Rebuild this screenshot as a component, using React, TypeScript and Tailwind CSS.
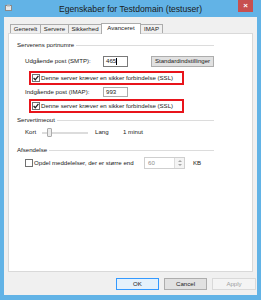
import React from "react";

function Check({ checked }: { checked?: boolean }) {
  return (
    <div className="w-[8px] h-[8px] border border-[#707070] bg-white flex items-center justify-center shrink-0">
      {checked && (
        <svg width="6" height="6" viewBox="0 0 6 6">
          <path d="M0.6 3 L2.3 4.8 L5.4 0.8" stroke="#222" strokeWidth="1.3" fill="none" />
        </svg>
      )}
    </div>
  );
}

function Group({ title }: { title: string }) {
  return (
    <div className="flex items-center h-[8px] pr-[38px]">
      <span className="whitespace-nowrap">{title}</span>
      <div className="flex-1 h-px bg-[#dcdcdc] ml-[2px]" />
    </div>
  );
}

export default function App() {
  return (
    <div className="w-[261px] h-[300px] bg-[#62b3e6] flex flex-col overflow-hidden font-['Liberation_Sans',Arial,sans-serif] text-[6.1px] text-[#1a1a1a] leading-none">
      {/* title bar */}
      <div className="h-[17px] relative flex items-center justify-center shrink-0">
        <svg className="absolute left-[5px] top-[4px]" width="8" height="8" viewBox="0 0 8 8">
          <rect x="0.5" y="1.5" width="6" height="5" fill="#e8e8e8" stroke="#8a8a8a" />
          <rect x="2" y="0.5" width="3" height="2" fill="#b0b0b0" />
        </svg>
        <span className="text-[8.6px] text-[#1a1a1a] mt-[2px]">Egenskaber for Testdomain (testuser)</span>
        <div className="absolute right-[8px] top-0 w-[15px] h-[12px] bg-[#c75050] flex items-center justify-center">
          <span className="text-white text-[8px] font-bold">×</span>
        </div>
      </div>

      {/* client */}
      <div className="flex-1 mx-[4px] mb-[5px] bg-[#f0f0f0] flex flex-col">
        {/* tabs */}
        <div className="h-[16px] flex items-end pl-[6px] shrink-0">
          {[
            ["Generelt", 31],
            ["Servere", 29],
            ["Sikkerhed", 34],
          ].map(([t, w]) => (
            <div
              key={t as string}
              style={{ width: w as number }}
              className="h-[9px] border border-b-0 border-[#acacac] bg-[#f0f0f0] -mr-px flex items-center justify-center"
            >
              {t}
            </div>
          ))}
          <div className="w-[40px] h-[11px] border border-b-0 border-[#acacac] bg-white -mr-px -mb-px relative z-10 flex items-center justify-center pb-[1px]">
            Avanceret
          </div>
          <div className="w-[23px] h-[9px] border border-b-0 border-[#acacac] bg-[#f0f0f0] flex items-center justify-center">
            IMAP
          </div>
        </div>

        {/* panel */}
        <div className="mx-[4px] h-[239px] border border-[#d9d9d9] bg-white pl-[8px] flex flex-col shrink-0">
          <div className="mt-[7px]">
            <Group title="Serverens portnumre" />
          </div>

          <div className="mt-[7px] h-[11px] flex items-center pl-[8px]">
            <span className="w-[78px]">Udgående post (SMTP):</span>
            <div className="w-[25px] h-[11px] border border-[#7a7a7a] bg-white flex items-center pl-[2px]">
              465<span className="w-px h-[7px] bg-black" />
            </div>
            <div className="ml-[23px] w-[63px] h-[11px] border border-[#adadad] bg-[#e1e1e1] flex items-center justify-center">
              Standardindstillinger
            </div>
          </div>

          <div className="mt-[4px] ml-[12px] w-[155px] h-[14px] border-2 border-[#e8141b] flex items-center pl-[1px] gap-[1px]">
            <Check checked />
            <span className="whitespace-nowrap">Denne server kræver en sikker forbindelse (SSL)</span>
          </div>

          <div className="mt-[2px] h-[10px] flex items-center pl-[8px]">
            <span className="w-[78px]">Indgående post (IMAP):</span>
            <div className="w-[25px] h-[10px] border border-[#acacac] bg-white flex items-center pl-[2px]">993</div>
          </div>

          <div className="mt-[2px] ml-[12px] w-[155px] h-[14px] border-2 border-[#e8141b] flex items-center pl-[1px] gap-[1px]">
            <Check checked />
            <span className="whitespace-nowrap">Denne server kræver en sikker forbindelse (SSL)</span>
          </div>

          <div className="mt-[3px]">
            <Group title="Servertimeout" />
          </div>

          <div className="mt-[4px] h-[9px] flex items-center pl-[8px]">
            <span className="w-[17px]">Kort</span>
            <div className="w-[46px] h-[9px] relative flex items-center">
              <div className="w-full h-[2px] bg-[#e7eaea] border-y border-[#dcdcdc]" />
              <div className="absolute left-[5px] top-0 w-[5px] h-[9px] bg-[#ececec] border border-[#acacac] rounded-[1px]" />
            </div>
            <span className="ml-[7px] w-[28px]">Lang</span>
            <span>1 minut</span>
          </div>

          <div className="mt-[9px]">
            <Group title="Afsendelse" />
          </div>

          <div className="mt-[3px] h-[12px] flex items-center pl-[8px]">
            <Check />
            <span className="ml-[1px] w-[110px] whitespace-nowrap">Opdel meddelelser, der er større end</span>
            <div className="w-[41px] h-[12px] border border-[#cfcfcf] bg-white flex">
              <span className="flex-1 flex items-center pl-[3px] text-[#8d8d8d]">60</span>
              <div className="w-[10px] border-l border-[#dcdcdc] bg-[#f4f4f4] flex flex-col items-center justify-center gap-[2px]">
                <svg width="4" height="2" viewBox="0 0 4 2"><path d="M0 2 L2 0 L4 2Z" fill="#a6a6a6" /></svg>
                <svg width="4" height="2" viewBox="0 0 4 2"><path d="M0 0 L2 2 L4 0Z" fill="#a6a6a6" /></svg>
              </div>
            </div>
            <span className="ml-[8px]">KB</span>
          </div>
        </div>

        {/* buttons */}
        <div className="mt-[6px] h-[12px] flex justify-end gap-[5px] pr-[1px]">
          <div className="w-[43px] h-[12px] border border-[#3399ff] bg-[#e5f1fb] flex items-center justify-center">OK</div>
          <div className="w-[43px] h-[12px] border border-[#adadad] bg-[#e1e1e1] flex items-center justify-center">Cancel</div>
          <div className="w-[44px] h-[12px] border border-[#d9d9d9] bg-[#f4f4f4] text-[#a0a0a0] flex items-center justify-center">Apply</div>
        </div>
      </div>
    </div>
  );
}
